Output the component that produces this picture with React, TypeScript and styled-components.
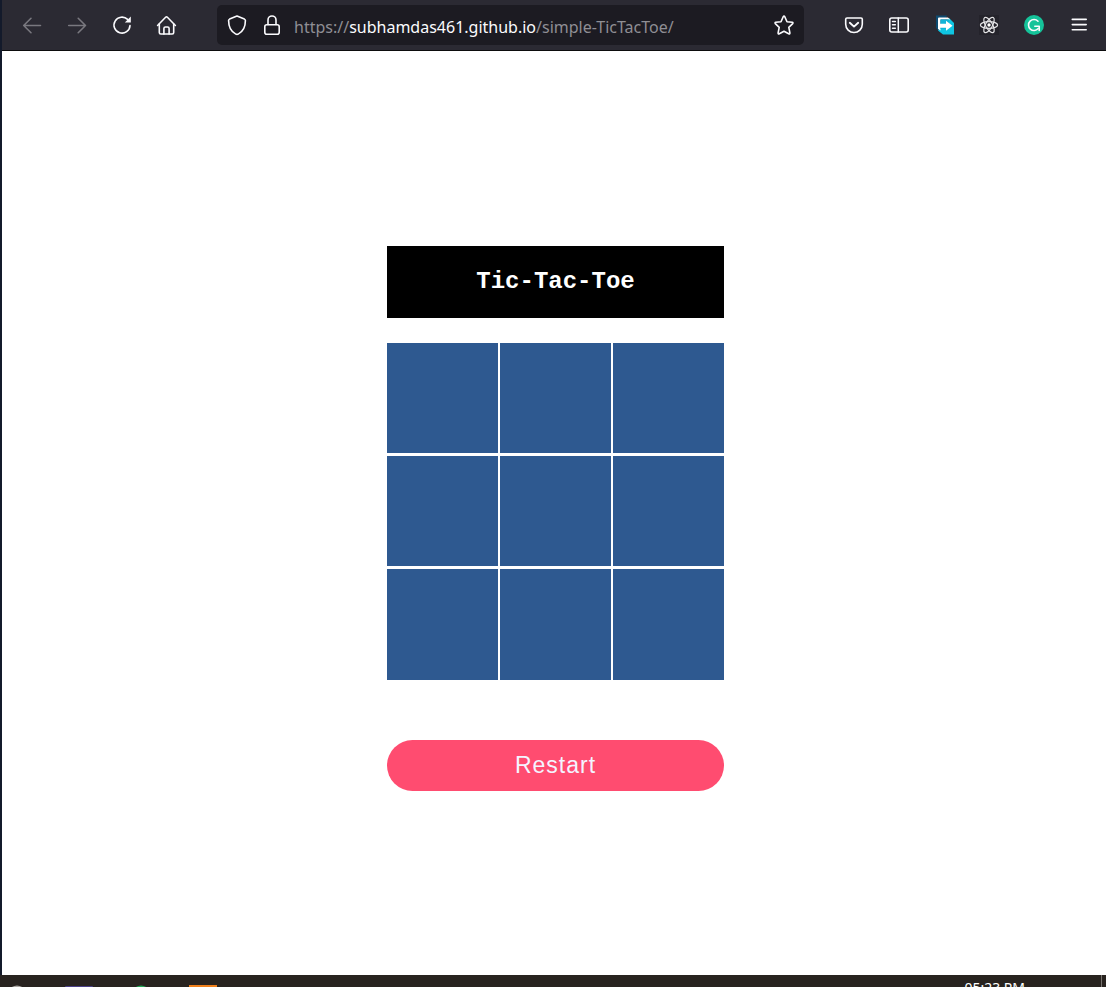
import React, { useState } from "react";
import styled, { createGlobalStyle } from "styled-components";

const GlobalStyle = createGlobalStyle`
  * { box-sizing: border-box; }
  body { margin: 0; background: #141a28; }
  button { border: 0; margin: 0; padding: 0; cursor: pointer; }
`;

const Screen = styled.div`
  min-height: 100vh;
  display: flex;
  flex-direction: column;
`;

const BrowserWindow = styled.div`
  flex: 1;
  display: flex;
  flex-direction: column;
  border-left: 2px solid #131a2b;
  background: #fff;
`;

const Toolbar = styled.header`
  display: flex;
  align-items: center;
  height: 51px;
  padding: 0 5px 0 7px;
  background: #2b2a33;
  border-bottom: 1px solid #0c0c0d;
`;

const ToolGroup = styled.div`
  display: flex;
  flex: none;
`;

const ToolButton = styled.button`
  display: flex;
  align-items: center;
  justify-content: center;
  width: 45px;
  height: 40px;
  background: transparent;
  color: #fbfbfe;
  &:disabled { color: #79787f; cursor: default; }
`;

const AddressBar = styled.div`
  flex: 1;
  min-width: 0;
  display: flex;
  align-items: center;
  height: 40px;
  margin: 0 27px 0 28px;
  padding: 0 7px 0 8px;
  border-radius: 5px;
  background: #1c1b22;
`;

const AddressButton = styled.button`
  display: flex;
  flex: none;
  background: transparent;
  color: #fbfbfe;
  & + & { margin-left: 10px; }
`;

const Url = styled.div`
  flex: 1;
  min-width: 0;
  margin-left: 9px;
  padding-top: 4px;
  overflow: hidden;
  white-space: nowrap;
  font: 16px/24px "Noto Sans", sans-serif;
  color: #8f8e94;
  outline: none;
`;

const Host = styled.span`
  color: #fbfbfe;
`;

const Page = styled.main`
  flex: 1;
  display: flex;
  align-items: center;
  justify-content: center;
  padding: 11px 0 0 3px;
`;

const Game = styled.section`
  display: flex;
  flex-direction: column;
  width: 337px;
`;

const Title = styled.h1`
  margin: 0 0 25px;
  padding: 20px 0;
  background: #000;
  color: #fff;
  text-align: center;
  font: bold 24px/32px "Liberation Mono", monospace;
`;

const Board = styled.div`
  display: grid;
  grid-template-columns: repeat(3, 1fr);
  grid-template-rows: 110px 110px 111px;
  gap: 3px 2px;
  margin-bottom: 60px;
`;

const Cell = styled.button`
  background: #2e5990;
  color: #fff;
  font: 64px/1 "Liberation Sans", sans-serif;
`;

const RestartButton = styled.button`
  height: 51px;
  padding-bottom: 2px;
  border-radius: 26px;
  background: #ff4c70;
  color: #f4f4ff;
  font: 23px/28px "Liberation Sans", sans-serif;
  letter-spacing: 1px;
`;

const Taskbar = styled.footer`
  display: flex;
  justify-content: space-between;
  height: 12px;
  overflow: hidden;
  background: #28231f;
`;

const Clock = styled.time`
  height: 24px;
  margin-top: 3px;
  padding-right: 76px;
  font: 14px/20px "Noto Sans", sans-serif;
  color: #fff;
`;

const Tray = styled.div`
  display: flex;
  border-right: 1px solid #77736f;
  margin-right: 4px;
`;

const Glyph = styled.svg.attrs({ width: 25, height: 24, viewBox: "0 0 25 24", "aria-hidden": true })`
  display: block;
  fill: none;
  stroke: currentColor;
  stroke-width: 1.6;
  stroke-linecap: round;
  stroke-linejoin: round;
`;

const lines = [
  [0, 1, 2], [3, 4, 5], [6, 7, 8],
  [0, 3, 6], [1, 4, 7], [2, 5, 8],
  [0, 4, 8], [2, 4, 6],
];

export default function App() {
  const [cells, setCells] = useState<string[]>(Array(9).fill(""));
  const won = lines.some(([a, b, c]) => cells[a] && cells[a] === cells[b] && cells[a] === cells[c]);

  const play = (i: number) => {
    if (cells[i] || won) return;
    const mark = cells.filter(Boolean).length % 2 === 0 ? "X" : "O";
    setCells(cells.map((c, n) => (n === i ? mark : c)));
  };

  return (
    <Screen>
      <GlobalStyle />
      <BrowserWindow>
        <Toolbar>
          <ToolGroup>
            <ToolButton disabled aria-label="Back">
              <Glyph><path d="M21.5 12.5H4.7M12 5.3L4.7 12.5L12 19.7" /></Glyph>
            </ToolButton>
            <ToolButton disabled aria-label="Forward">
              <Glyph><path d="M4.7 12.5H21.5M14.2 5.3L21.5 12.5L14.2 19.7" /></Glyph>
            </ToolButton>
            <ToolButton aria-label="Reload">
              <Glyph>
                <path d="M18.6 6.4A8 8 0 1 0 21 12.6" />
                <path d="M21.8 3.4V9.4H15.8Z" fill="currentColor" stroke="none" />
              </Glyph>
            </ToolButton>
            <ToolButton aria-label="Home">
              <Glyph>
                <path d="M3.6 12.5L11.6 4.3Q12.5 3.4 13.4 4.3L21.4 12.5" />
                <path d="M5.3 11V19.5Q5.3 21 6.8 21H18.2Q19.7 21 19.7 19.5V11" />
                <path d="M9.9 21V15.5Q9.9 14 11.4 14H13.6Q15.1 14 15.1 15.5V21" />
              </Glyph>
            </ToolButton>
          </ToolGroup>

          <AddressBar>
            <AddressButton aria-label="Tracking protection">
              <Glyph>
                <path d="M12 3L19.4 6.1Q20.4 6.6 20.4 7.6C20.4 13.5 18 18.8 13.2 21.1Q12 21.7 10.8 21.1C6 18.8 3.6 13.5 3.6 7.6Q3.6 6.6 4.6 6.1Z" />
              </Glyph>
            </AddressButton>
            <AddressButton aria-label="Site information">
              <Glyph>
                <rect x="4.8" y="11.8" width="14.4" height="9.4" rx="2" />
                <path d="M8 11.5V7A4 4 0 0 1 16 7V11.5" />
              </Glyph>
            </AddressButton>
            <Url role="textbox" aria-label="Address" contentEditable suppressContentEditableWarning spellCheck={false}>
              https://<Host>subhamdas461.github.io</Host>/simple-TicTacToe/
            </Url>
            <AddressButton aria-label="Bookmark this page">
              <Glyph>
                <path d="M11.2 3.7Q12 2.5 12.8 3.7L15 8.7L20.2 9.3Q21.5 9.6 20.7 10.6L16.8 14.3L17.9 19.8Q18 21.3 16.7 20.8L12 18.2L7.3 20.8Q6 21.3 6.1 19.8L7.2 14.3L3.3 10.6Q2.5 9.6 3.8 9.3L9 8.7Z" />
              </Glyph>
            </AddressButton>
          </AddressBar>

          <ToolGroup>
            <ToolButton aria-label="Save to Pocket">
              <Glyph>
                <path d="M6 5H20Q21.3 5 21.3 6.3V11.2A8.3 8.3 0 0 1 4.7 11.2V6.3Q4.7 5 6 5Z" />
                <path d="M8.8 9.8L13 13.6L17.2 9.8" strokeWidth="1.9" />
              </Glyph>
            </ToolButton>
            <ToolButton aria-label="Sidebars">
              <Glyph>
                <rect x="3.8" y="5" width="18.4" height="14" rx="2" />
                <path d="M12.3 5V19M6.5 8.4H9.3M6.5 11.8H9.3M6.5 15.2H9.3" strokeWidth="1.5" />
              </Glyph>
            </ToolButton>
            <ToolButton aria-label="Transfer extension">
              <Glyph>
                <g stroke="none">
                  <path d="M5 2.5H16L9 19L5 15Z" fill="#0d4a70" />
                  <path d="M18 5L23 10V21.5H12L7 17.5Z" fill="#0fc5e2" />
                  <path d="M8 4.5H17L19 6.5H9.5V17.5L7 16V5.5Q7 4.5 8 4.5Z" fill="#fff" />
                  <path d="M9.5 6.5H18V16H9.5Z" fill="#12b4d8" />
                  <path d="M8 10.8H15V7.8L21.5 12.8L15 17.8V14.8H8Z" fill="#fff" />
                </g>
              </Glyph>
            </ToolButton>
            <ToolButton aria-label="React Developer Tools">
              <Glyph>
                <rect x="3" y="2" width="20" height="20" fill="#24232b" stroke="none" />
                <g strokeWidth="1.2" stroke="#e4e4e6">
                  <ellipse cx="13" cy="12" rx="8.6" ry="3.4" />
                  <ellipse cx="13" cy="12" rx="8.6" ry="3.4" transform="rotate(60 13 12)" />
                  <ellipse cx="13" cy="12" rx="8.6" ry="3.4" transform="rotate(120 13 12)" />
                </g>
                <circle cx="13" cy="12" r="1.7" fill="#fff" stroke="none" />
              </Glyph>
            </ToolButton>
            <ToolButton aria-label="Grammarly">
              <Glyph>
                <circle cx="13" cy="12" r="10" fill="#15c39a" stroke="none" />
                <path d="M17 8.2A5.5 5.5 0 1 0 17.2 15.6" />
                <path d="M13.8 13.3H18.2V17.4" />
              </Glyph>
            </ToolButton>
            <ToolButton aria-label="Menu">
              <Glyph><path d="M6.3 6.4H20.2M6.3 11.6H20.2M6.3 16.8H20.2" /></Glyph>
            </ToolButton>
          </ToolGroup>
        </Toolbar>

        <Page>
          <Game>
            <Title>Tic-Tac-Toe</Title>
            <Board>
              {cells.map((mark, i) => (
                <Cell key={i} aria-label={`Square ${i + 1}`} onClick={() => play(i)}>{mark}</Cell>
              ))}
            </Board>
            <RestartButton onClick={() => setCells(Array(9).fill(""))}>Restart</RestartButton>
          </Game>
        </Page>
      </BrowserWindow>

      <Taskbar>
        <svg width="230" height="12" viewBox="0 0 230 12" aria-hidden="true">
          <circle cx="17" cy="20" r="9.5" fill="#aaa6a2" />
          <rect x="65" y="11" width="28" height="4" rx="1" fill="#4a3f86" />
          <circle cx="141" cy="20" r="9.5" fill="#23a455" />
          <rect x="189" y="10" width="28" height="4" fill="#ef7f1a" />
        </svg>
        <Tray>
          <Clock>05:23 PM</Clock>
        </Tray>
      </Taskbar>
    </Screen>
  );
}
